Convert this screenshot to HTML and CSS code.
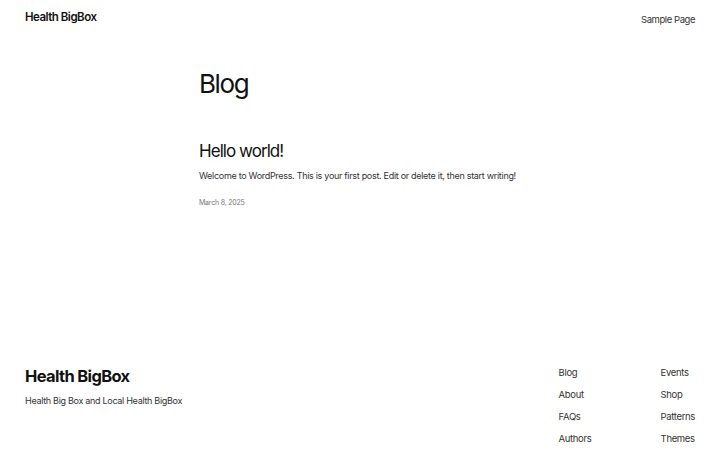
FILE: index.html
```html
<!DOCTYPE html>
<html lang="en">
<head>
<meta charset="utf-8">
<title>Blog – Health BigBox</title>
<link rel="stylesheet" href="styles.css">
</head>
<body>
<header class="site-header">
  <a class="site-title" href="#">Health BigBox</a>
  <nav class="header-nav"><a href="#">Sample Page</a></nav>
</header>
<main class="site-main">
  <h1 class="page-title">Blog</h1>
  <article class="post">
    <h2 class="post-title">Hello world!</h2>
    <p class="post-excerpt">Welcome to WordPress. This is your first post. Edit or delete it, then start writing!</p>
    <p class="post-date">March 8, 2025</p>
  </article>
</main>
<footer class="site-footer">
  <div class="footer-brand">
    <div class="footer-title">Health BigBox</div>
    <p class="footer-tagline">Health Big Box and Local Health BigBox</p>
  </div>
  <nav class="footer-nav">
    <ul class="footer-col">
      <li><a href="#">Blog</a></li>
      <li><a href="#">About</a></li>
      <li><a href="#">FAQs</a></li>
      <li><a href="#">Authors</a></li>
    </ul>
    <ul class="footer-col">
      <li><a href="#">Events</a></li>
      <li><a href="#">Shop</a></li>
      <li><a href="#">Patterns</a></li>
      <li><a href="#">Themes</a></li>
    </ul>
  </nav>
</footer>
</body>
</html>
```
FILE: styles.css
```css
* { box-sizing: border-box; }
html, body { margin: 0; padding: 0; background: #fff; }
body {
  font-family: Inter, "Noto Sans", "DejaVu Sans", sans-serif;
  color: #111;
  width: 720px;
  height: 450px;
  overflow: hidden;
}
a { color: inherit; text-decoration: none; }
p { margin: 0; }

.site-header {
  display: flex;
  justify-content: space-between;
  align-items: center;
  padding: 10px 25px;
  height: 34px;
}
.site-title {
  font-size: 11.5px;
  font-weight: 600;
  letter-spacing: -0.5px;
  line-height: 14px;
}
.header-nav a {
  font-size: 9.5px;
  color: #333;
  line-height: 14px;
  letter-spacing: -0.45px;
}

.site-main {
  width: 322px;
  margin: 0 auto;
  padding-top: 33px;
}
.page-title {
  margin: 0;
  font-size: 26px;
  font-weight: 400;
  line-height: 34px;
  letter-spacing: -1.4px;
}
.post { padding-top: 39px; }
.post-title {
  margin: 0;
  font-size: 17px;
  font-weight: 400;
  line-height: 22px;
  letter-spacing: -0.95px;
}
.post-excerpt {
  margin-top: 6px;
  font-size: 9px;
  line-height: 15px;
  color: #333;
  letter-spacing: -0.3px;
  white-space: nowrap;
}
.post-date {
  margin-top: 14px;
  font-size: 7px;
  line-height: 11px;
  color: #777;
  letter-spacing: -0.2px;
}

.site-footer {
  display: flex;
  justify-content: space-between;
  align-items: flex-start;
  padding: 157px 25px 0;
}
.footer-brand { padding-top: 1px; }
.footer-title {
  font-size: 16.5px;
  font-weight: 700;
  line-height: 20px;
  letter-spacing: -0.65px;
}
.footer-tagline {
  margin-top: 7px;
  font-size: 9px;
  line-height: 15px;
  color: #333;
  letter-spacing: -0.3px;
}
.footer-nav {
  display: flex;
}
.footer-col {
  list-style: none;
  margin: 0;
  padding: 0;
  display: flex;
  flex-direction: column;
  gap: 7px;
}
.footer-col:first-child { width: 102px; }
.footer-col li {
  font-size: 9.5px;
  line-height: 15px;
  color: #333;
  letter-spacing: -0.35px;
}
```
